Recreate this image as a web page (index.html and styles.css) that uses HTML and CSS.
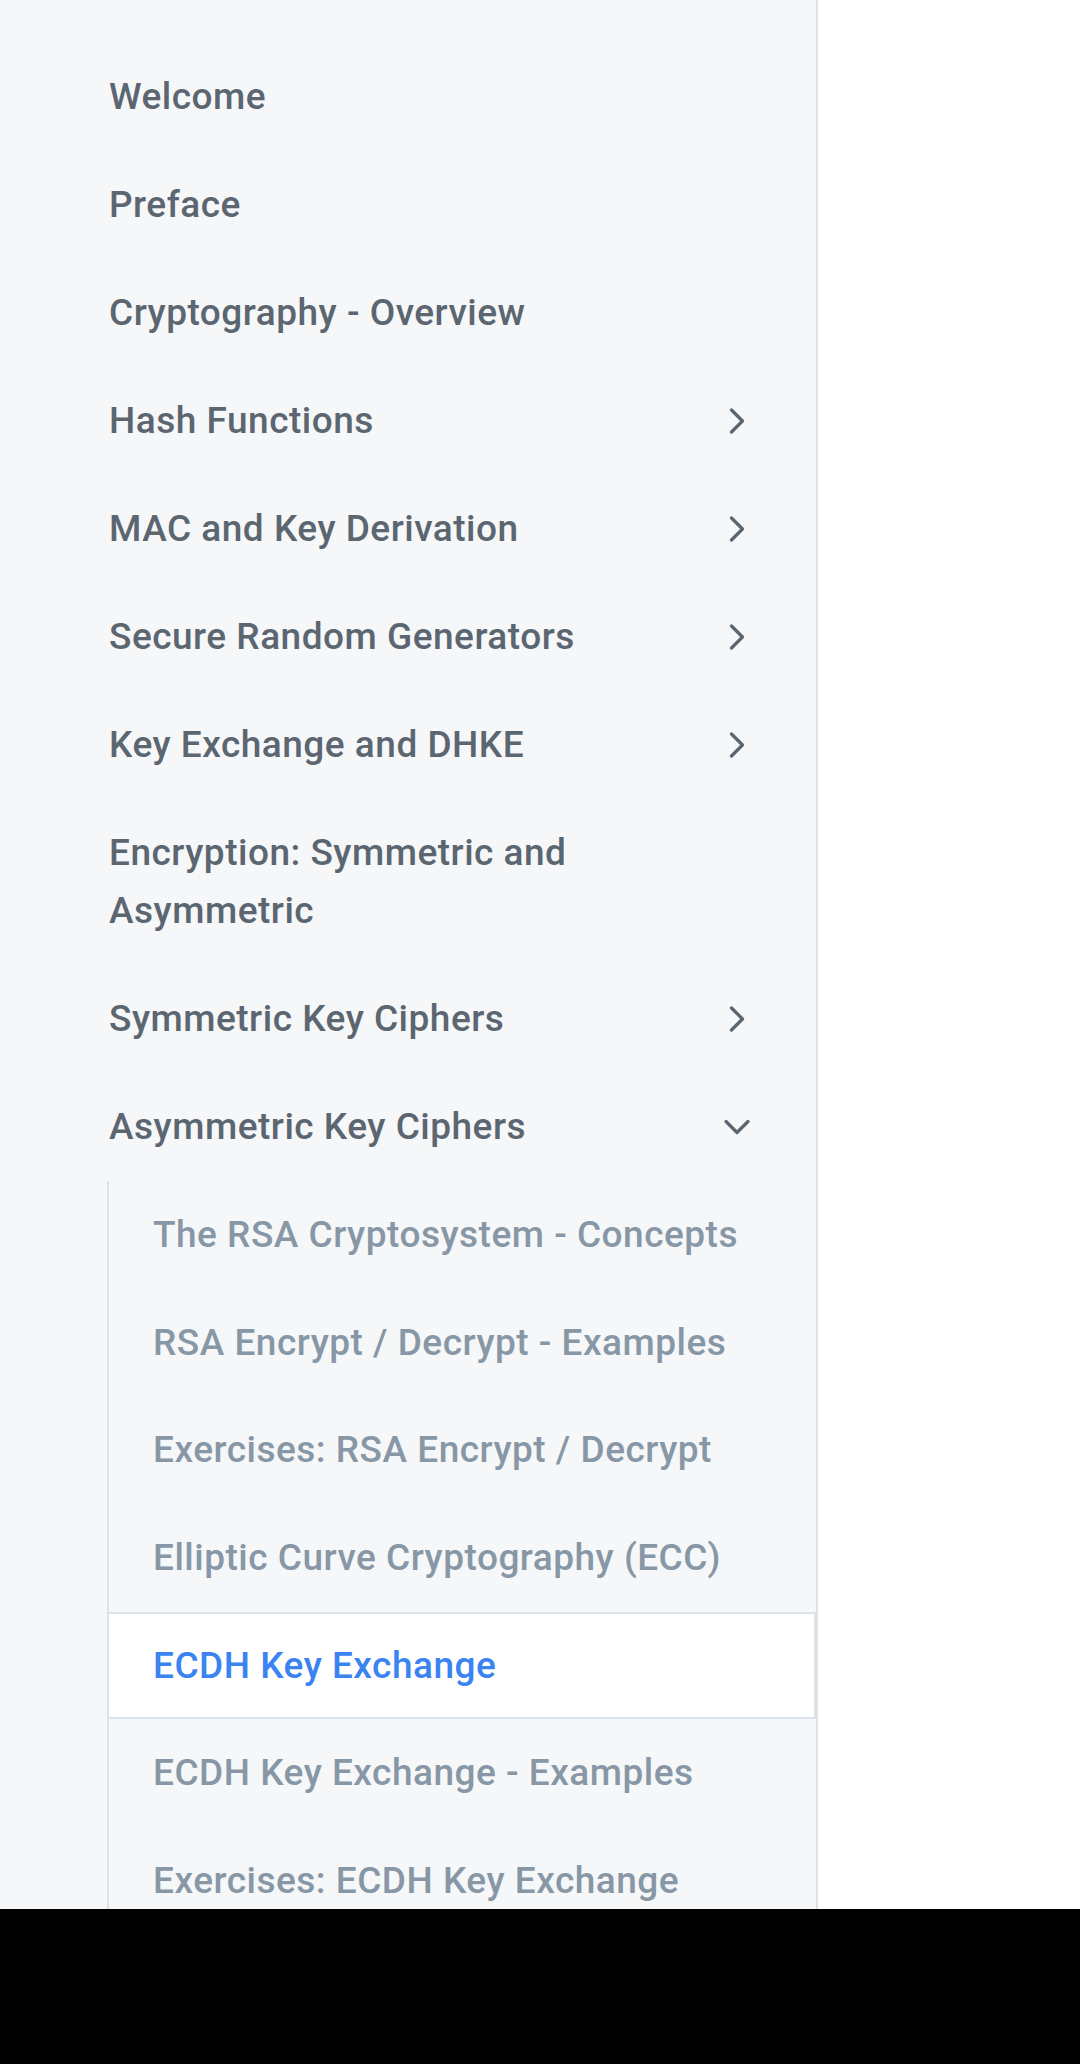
FILE: index.html
```html
<!DOCTYPE html>
<html lang="en">
<head>
    <meta charset="UTF-8">
    <meta name="viewport" content="width=device-width, initial-scale=1.0">
    <title>Practical Cryptography</title>
    <link rel="stylesheet" href="styles.css">
</head>
<body>
    <div class="screen">
        <nav class="sidebar">
            <ul class="nav">
                <li><a class="nav-item" href="#">Welcome</a></li>
                <li><a class="nav-item" href="#">Preface</a></li>
                <li><a class="nav-item" href="#">Cryptography - Overview</a></li>
                <li>
                    <a class="nav-item" href="#">Hash Functions
                        <svg class="chevron" viewBox="0 0 24 24"><polyline points="9 18 15 12 9 6"></polyline></svg>
                    </a>
                </li>
                <li>
                    <a class="nav-item" href="#">MAC and Key Derivation
                        <svg class="chevron" viewBox="0 0 24 24"><polyline points="9 18 15 12 9 6"></polyline></svg>
                    </a>
                </li>
                <li>
                    <a class="nav-item" href="#">Secure Random Generators
                        <svg class="chevron" viewBox="0 0 24 24"><polyline points="9 18 15 12 9 6"></polyline></svg>
                    </a>
                </li>
                <li>
                    <a class="nav-item" href="#">Key Exchange and DHKE
                        <svg class="chevron" viewBox="0 0 24 24"><polyline points="9 18 15 12 9 6"></polyline></svg>
                    </a>
                </li>
                <li><a class="nav-item" href="#">Encryption: Symmetric and Asymmetric</a></li>
                <li>
                    <a class="nav-item" href="#">Symmetric Key Ciphers
                        <svg class="chevron" viewBox="0 0 24 24"><polyline points="9 18 15 12 9 6"></polyline></svg>
                    </a>
                </li>
                <li>
                    <a class="nav-item" href="#">Asymmetric Key Ciphers
                        <svg class="chevron" viewBox="0 0 24 24"><polyline points="6 9 12 15 18 9"></polyline></svg>
                    </a>
                    <ul class="subnav">
                        <li><a class="sub-item" href="#">The RSA Cryptosystem - Concepts</a></li>
                        <li><a class="sub-item" href="#">RSA Encrypt / Decrypt - Examples</a></li>
                        <li><a class="sub-item" href="#">Exercises: RSA Encrypt / Decrypt</a></li>
                        <li><a class="sub-item" href="#">Elliptic Curve Cryptography (ECC)</a></li>
                        <li><a class="sub-item active" href="#">ECDH Key Exchange</a></li>
                        <li><a class="sub-item" href="#">ECDH Key Exchange - Examples</a></li>
                        <li><a class="sub-item" href="#">Exercises: ECDH Key Exchange</a></li>
                    </ul>
                </li>
            </ul>
        </nav>
        <main class="content"></main>
    </div>
    <div class="system-bar"></div>
</body>
</html>
```

FILE: styles.css
```css
body {
    margin: 0;
    font-family: Roboto, "Liberation Sans", sans-serif;
    background-color: #fff;
}

.screen {
    display: flex;
    height: 1909px;
    overflow: hidden;
}

.sidebar {
    width: 816px;
    flex-shrink: 0;
    background-color: #f5f7f9;
    border-right: 2px solid #dbe2e9;
    overflow: hidden;
}

.content {
    flex: 1;
    background-color: #fff;
}

.nav {
    list-style: none;
    margin: 0;
    padding: 43px 0 0 107px;
}

.nav-item {
    display: flex;
    align-items: center;
    justify-content: space-between;
    padding: 25px 57px 25px 2px;
    font-size: 37px;
    font-weight: 500;
    letter-spacing: 0.5px;
    line-height: 58px;
    color: #5b6671;
    text-decoration: none;
}

.chevron {
    width: 44px;
    height: 44px;
    flex-shrink: 0;
    fill: none;
    stroke: #5b6671;
    stroke-width: 1.8;
    stroke-linecap: round;
    stroke-linejoin: round;
}

.subnav {
    list-style: none;
    margin: 0;
    padding: 0;
    border-left: 2px solid #dbe2e9;
}

.sub-item {
    display: block;
    padding: 24.85px 20px 24.85px 44px;
    font-size: 37px;
    font-weight: 500;
    letter-spacing: 0.5px;
    line-height: 58px;
    color: #8897a6;
    text-decoration: none;
    white-space: nowrap;
}

.sub-item.active {
    color: #3a83f1;
    background-color: #fff;
    border-top: 2px solid #dbe2e9;
    border-bottom: 2px solid #dbe2e9;
    border-right: 2px solid #dbe2e9;
    padding-top: 22.85px;
    padding-bottom: 22.85px;
}

.system-bar {
    height: 155px;
    background-color: #000;
}
```
